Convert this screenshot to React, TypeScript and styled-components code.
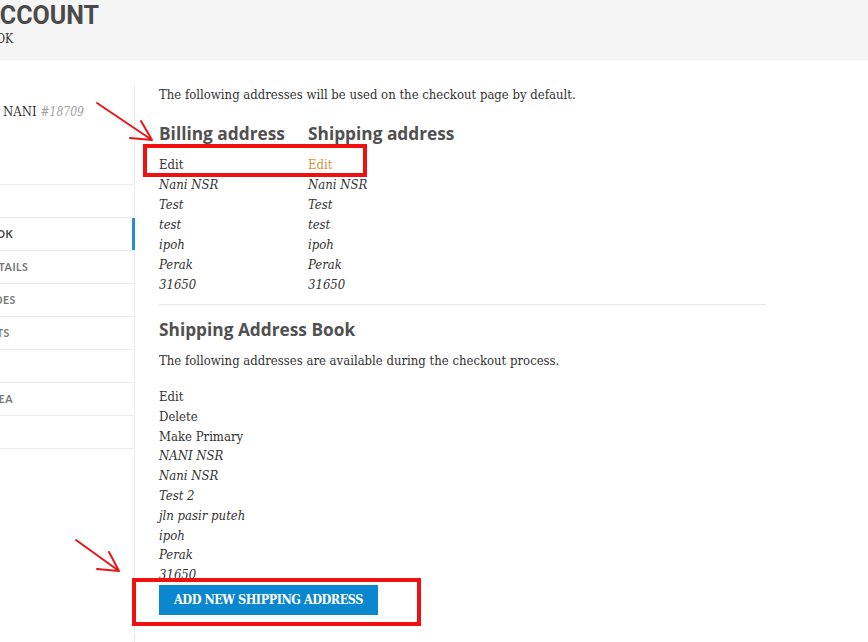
import React from "react";
import styled, { createGlobalStyle } from "styled-components";

const Global = createGlobalStyle`
  html, body { margin: 0; padding: 0; background: #fff; overflow: hidden; }
  body {
    font-family: 'DejaVu Serif Condensed', 'DejaVu Serif', serif;
    color: #333;
  }
`;

const Page = styled.div`
  position: relative;
  width: 868px;
  height: 642px;
  overflow: hidden;
`;

const Header = styled.header`
  height: 60px;
  box-sizing: border-box;
  background: #f5f5f5;
  border-bottom: 1px solid #eeeeee;
  padding-top: 1px;
`;

const HeaderInner = styled.div`
  margin-left: -60px;
`;

const Title = styled.h1`
  margin: 0;
  font-family: Roboto, 'Open Sans', sans-serif;
  font-weight: 700;
  font-size: 25px;
  line-height: 30px;
  color: #4a4a4a;
  text-transform: uppercase;
`;

const Crumb = styled.div`
  margin: 1px 0 0 -20px;
  font-size: 12px;
  line-height: 14px;
  text-transform: uppercase;
  color: #333;
`;

const Body = styled.div`
  display: flex;
  margin-left: -71px;
  padding-top: 25px;
  height: 582px;
  box-sizing: border-box;
`;

const Sidebar = styled.aside`
  width: 206px;
  flex: none;
  box-sizing: border-box;
  border-right: 1px solid #ececec;
`;

const NameRow = styled.div`
  display: flex;
  align-items: center;
  gap: 10px;
  height: 52px;
  margin-bottom: 47px;
`;

const Avatar = styled.div`
  width: 64px;
  height: 52px;
  border-radius: 50%;
  background: #ddd;
  flex: none;
`;

const Name = styled.div`
  font-size: 13px;
  color: #333;
  white-space: nowrap;
`;

const UserId = styled.span`
  font-style: italic;
  font-size: 12px;
  color: #a0a0a0;
  margin-left: 4px;
`;

const Menu = styled.ul`
  list-style: none;
  margin: 0;
  padding: 0;
  border-top: 1px solid #ececec;
`;

const MenuItem = styled.li<{ $active?: boolean }>`
  height: 32px;
  line-height: 32px;
  border-bottom: 1px solid #ececec;
  margin-right: ${(p) => (p.$active ? "-1px" : "0")};
  box-shadow: ${(p) => (p.$active ? "inset -3px 0 0 #2a8bcf" : "none")};
  font-family: Lato, 'Open Sans', sans-serif;
  font-weight: 700;
  font-size: 10.5px;
  letter-spacing: 0.5px;
  text-indent: -3px;
  text-transform: uppercase;
  color: ${(p) => (p.$active ? "#444" : "#777")};
  white-space: nowrap;
`;

const Main = styled.main`
  flex: 1;
  padding-left: 24px;
  min-width: 0;
`;

const Para = styled.p<{ $mt?: number }>`
  margin: ${(p) => p.$mt ?? 0}px 0 0;
  font-size: 13px;
  line-height: 20px;
  color: #333;
  white-space: nowrap;
`;

const Columns = styled.div`
  display: grid;
  grid-template-columns: 149px 149px;
  margin-top: 18px;
`;

const Heading = styled.h3<{ $mt?: number }>`
  margin: ${(p) => p.$mt ?? 0}px 0 0;
  font-family: 'Open Sans', sans-serif;
  font-weight: 700;
  font-size: 17.3px;
  line-height: 22px;
  color: #505050;
  white-space: nowrap;
`;

const Lines = styled.div<{ $mt?: number; $lh?: number }>`
  margin-top: ${(p) => p.$mt ?? 0}px;
  font-size: 13px;
  line-height: ${(p) => p.$lh ?? 20}px;
  display: flex;
  flex-direction: column;
`;

const LinkLine = styled.a<{ $accent?: boolean }>`
  color: ${(p) => (p.$accent ? "#cf9545" : "#333")};
  text-decoration: none;
`;

const Address = styled.address`
  font-style: italic;
  display: flex;
  flex-direction: column;
  color: #333;
`;

const Rule = styled.hr`
  width: 607px;
  margin: 9px 0 14px;
  border: 0;
  border-top: 1px solid #e6e6e6;
  height: 0;
`;

const Button = styled.a`
  display: block;
  width: 219px;
  height: 30px;
  line-height: 30px;
  text-align: center;
  background: #0b87cf;
  color: #fff;
  font-weight: 700;
  font-size: 12.5px;
  letter-spacing: -0.45px;
  text-transform: uppercase;
  text-decoration: none;
`;

const Overlay = styled.svg`
  position: absolute;
  left: 0;
  top: 0;
  pointer-events: none;
`;

const billing = ["Nani NSR", "Test", "test", "ipoh", "Perak", "31650"];
const book = ["NANI NSR", "Nani NSR", "Test 2", "jln pasir puteh", "ipoh", "Perak", "31650"];
const menu = ["Orders", "Address Book", "Account Details", "Coupon Codes", "Bonus Points", "", "Members Area", ""];

export default function App() {
  return (
    <Page>
      <Global />
      <Header>
        <HeaderInner>
          <Title>My Account</Title>
          <Crumb>Address Book</Crumb>
        </HeaderInner>
      </Header>
      <Body>
        <Sidebar>
          <NameRow>
            <Avatar />
            <Name>
              NANI<UserId>#18709</UserId>
            </Name>
          </NameRow>
          <Menu>
            {menu.map((m, i) => (
              <MenuItem key={i} $active={m === "Address Book"}>
                {m}
              </MenuItem>
            ))}
          </Menu>
        </Sidebar>
        <Main>
          <Para>The following addresses will be used on the checkout page by default.</Para>
          <Columns>
            <div>
              <Heading>Billing address</Heading>
              <Lines $mt={10}>
                <LinkLine href="#">Edit</LinkLine>
                <Address>
                  {billing.map((l, i) => (
                    <span key={i}>{l}</span>
                  ))}
                </Address>
              </Lines>
            </div>
            <div>
              <Heading>Shipping address</Heading>
              <Lines $mt={10}>
                <LinkLine href="#" $accent>
                  Edit
                </LinkLine>
                <Address>
                  {billing.map((l, i) => (
                    <span key={i}>{l}</span>
                  ))}
                </Address>
              </Lines>
            </div>
          </Columns>
          <Rule />
          <Heading>Shipping Address Book</Heading>
          <Para $mt={10}>The following addresses are available during the checkout process.</Para>
          <Lines $mt={16} $lh={19.8}>
            <LinkLine href="#">Edit</LinkLine>
            <LinkLine href="#">Delete</LinkLine>
            <LinkLine href="#">Make Primary</LinkLine>
            <Address>
              {book.map((l, i) => (
                <span key={i}>{l}</span>
              ))}
            </Address>
          </Lines>
          <Button href="#">Add new shipping address</Button>
        </Main>
      </Body>
      <Overlay width="868" height="642" viewBox="0 0 868 642">
        <g fill="none" stroke="#f01010" strokeWidth="4">
          <rect x="145" y="146" width="220" height="29" />
          <rect x="134" y="580" width="285" height="44" />
        </g>
        <g fill="none" stroke="#e8161b" strokeWidth="2" strokeLinecap="round">
          <path d="M97 103 L152 140 M152 140 L141 121 M152 140 L130 138" />
          <path d="M76 540 L119 571 M119 571 L109 552 M119 571 L97 569" />
        </g>
      </Overlay>
    </Page>
  );
}
